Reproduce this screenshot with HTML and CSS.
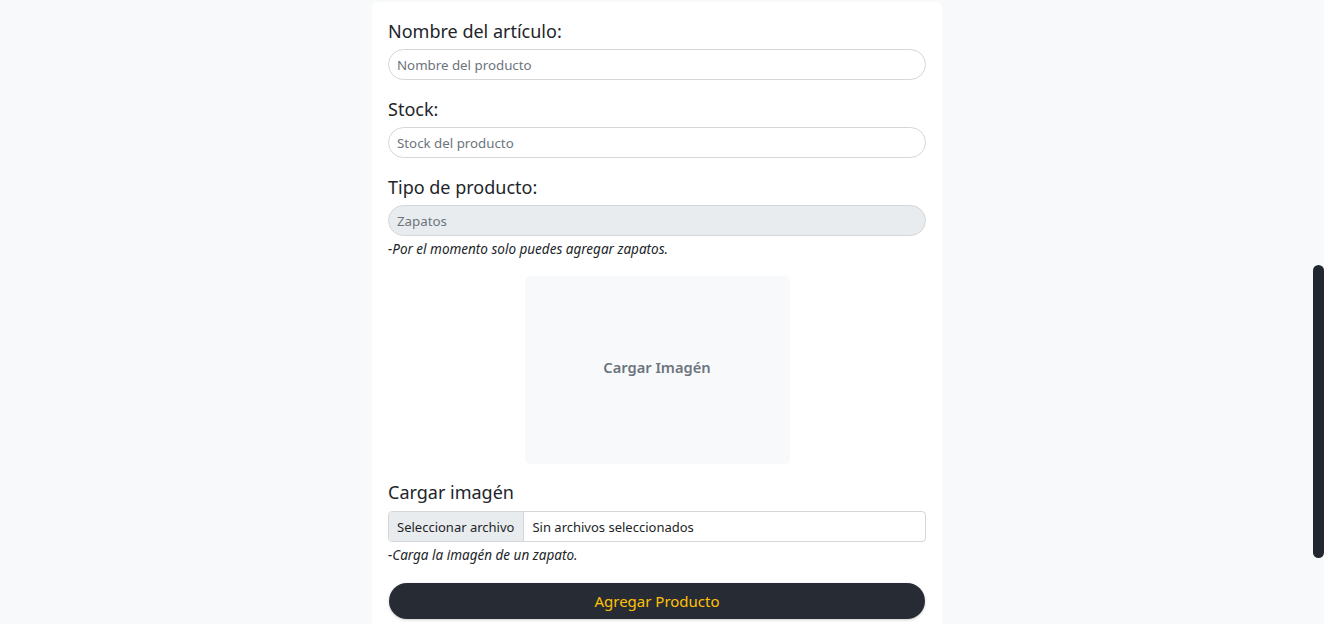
FILE: index.html
```html
<!DOCTYPE html>
<html lang="es">
<head>
<meta charset="utf-8">
<title>Agregar producto</title>
<link rel="stylesheet" href="styles.css">
</head>
<body>
<main class="page">
  <form class="card">
    <div class="group">
      <label class="label" for="nombre">Nombre del artículo:</label>
      <input class="input pill" id="nombre" type="text" placeholder="Nombre del producto">
    </div>
    <div class="group">
      <label class="label" for="stock">Stock:</label>
      <input class="input pill" id="stock" type="text" placeholder="Stock del producto">
    </div>
    <div class="group">
      <label class="label" for="tipo">Tipo de producto:</label>
      <input class="input pill disabled" id="tipo" type="text" value="Zapatos" disabled>
      <p class="help">-Por el momento solo puedes agregar zapatos.</p>
    </div>
    <div class="preview">
      <span class="preview-text">Cargar Imagén</span>
    </div>
    <div class="group file-group">
      <label class="label" for="archivo">Cargar imagén</label>
      <div class="file">
        <span class="file-btn">Seleccionar archivo</span>
        <span class="file-name">Sin archivos seleccionados</span>
      </div>
      <p class="help">-Carga la imagén de un zapato.</p>
    </div>
    <button class="submit" type="button">Agregar Producto</button>
  </form>
</main>
<div class="scroll-thumb"></div>
</body>
</html>
```
FILE: styles.css
```css
* { box-sizing: border-box; }
html, body { margin: 0; padding: 0; height: 100%; overflow: hidden; }
body {
  background: #f8f9fa;
  font-family: "Noto Sans", "Open Sans", sans-serif;
  color: #212529;
}
.page {
  display: flex;
  justify-content: center;
  padding-top: 2px;
  padding-right: 10px;
}
.card {
  width: 570px;
  background: #fff;
  border-radius: 6px;
  padding: 17px 16px 30px;
  display: flex;
  flex-direction: column;
}
.group { display: flex; flex-direction: column; margin-bottom: 17px; }
.label {
  font-size: 18px;
  line-height: 24px;
  margin-bottom: 6px;
  color: #212529;
}
.input {
  height: 31px;
  border: 1px solid #d3d6da;
  padding: 0 8px;
  font-family: inherit;
  font-size: 13.3px;
  color: #212529;
  background: #fff;
  outline: none;
}
.input::placeholder { color: #6c757d; }
.pill { border-radius: 16px; }
.disabled { background: #e9ecef; color: #6c757d; }
.help {
  margin: 3px 0 0;
  font-size: 13.5px;
  line-height: 21px;
  font-style: italic;
  color: #212529;
}
.group:nth-child(3) { margin-bottom: 16px; }
.preview {
  align-self: center;
  width: 265px;
  height: 188px;
  background: #f8f9fa;
  border-radius: 5px;
  display: flex;
  align-items: center;
  justify-content: center;
  padding-bottom: 6px;
  margin-bottom: 16px;
}
.preview-text { font-size: 14.7px; font-weight: 600; color: #6c757d; }
.file-group .label { margin-bottom: 7px; }
.file {
  display: flex;
  height: 31px;
  border: 1px solid #d3d6da;
  border-radius: 4px;
  overflow: hidden;
  font-size: 13px;
}
.file-btn {
  background: #e9ecef;
  border-right: 1px solid #d3d6da;
  padding: 0 9px 0 8px;
  display: flex;
  align-items: center;
}
.file-name { padding: 0 8px; display: flex; align-items: center; }
.submit {
  margin: 0 1px;
  height: 36px;
  border: none;
  border-radius: 18px;
  background: #272b33;
  color: #ffc107;
  font-family: inherit;
  font-size: 15px;
  box-shadow: 0 1px 3px rgba(0,0,0,0.2);
}
.scroll-thumb {
  position: fixed;
  right: 0;
  top: 265px;
  width: 11px;
  height: 293px;
  border-radius: 6px;
  background: #22262e;
}
```
